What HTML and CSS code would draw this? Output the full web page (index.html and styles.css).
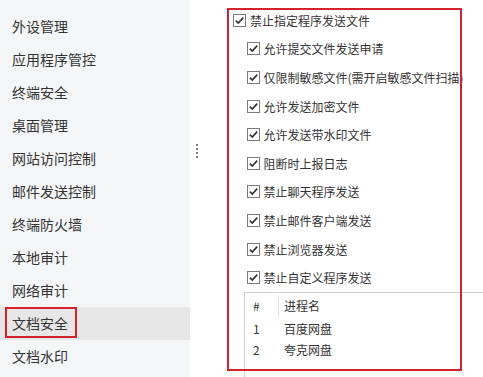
FILE: index.html
```html
<!DOCTYPE html>
<html lang="zh-CN">
<head>
<meta charset="utf-8">
<link rel="stylesheet" href="styles.css">
</head>
<body>
<div class="app">
  <nav class="sidebar">
    <div class="nav-item">外设管理</div>
    <div class="nav-item">应用程序管控</div>
    <div class="nav-item">终端安全</div>
    <div class="nav-item">桌面管理</div>
    <div class="nav-item">网站访问控制</div>
    <div class="nav-item">邮件发送控制</div>
    <div class="nav-item">终端防火墙</div>
    <div class="nav-item">本地审计</div>
    <div class="nav-item">网络审计</div>
    <div class="nav-item active">文档安全</div>
    <div class="nav-item">文档水印</div>
  </nav>
  <div class="handle"><i></i><i></i><i></i><i></i></div>
  <main class="content">
    <div class="options">
      <label class="opt"><svg class="cb" viewBox="0 0 13 13"><rect x="0.5" y="0.5" width="12" height="12"/><path d="M2.8 6.6 L5.3 9.1 L10.2 3.6"/></svg><span>禁止指定程序发送文件</span></label>
      <label class="opt sub"><svg class="cb" viewBox="0 0 13 13"><rect x="0.5" y="0.5" width="12" height="12"/><path d="M2.8 6.6 L5.3 9.1 L10.2 3.6"/></svg><span>允许提交文件发送申请</span></label>
      <label class="opt sub"><svg class="cb" viewBox="0 0 13 13"><rect x="0.5" y="0.5" width="12" height="12"/><path d="M2.8 6.6 L5.3 9.1 L10.2 3.6"/></svg><span>仅限制敏感文件(需开启敏感文件扫描)</span></label>
      <label class="opt sub"><svg class="cb" viewBox="0 0 13 13"><rect x="0.5" y="0.5" width="12" height="12"/><path d="M2.8 6.6 L5.3 9.1 L10.2 3.6"/></svg><span>允许发送加密文件</span></label>
      <label class="opt sub"><svg class="cb" viewBox="0 0 13 13"><rect x="0.5" y="0.5" width="12" height="12"/><path d="M2.8 6.6 L5.3 9.1 L10.2 3.6"/></svg><span>允许发送带水印文件</span></label>
      <label class="opt sub"><svg class="cb" viewBox="0 0 13 13"><rect x="0.5" y="0.5" width="12" height="12"/><path d="M2.8 6.6 L5.3 9.1 L10.2 3.6"/></svg><span>阻断时上报日志</span></label>
      <label class="opt sub"><svg class="cb" viewBox="0 0 13 13"><rect x="0.5" y="0.5" width="12" height="12"/><path d="M2.8 6.6 L5.3 9.1 L10.2 3.6"/></svg><span>禁止聊天程序发送</span></label>
      <label class="opt sub"><svg class="cb" viewBox="0 0 13 13"><rect x="0.5" y="0.5" width="12" height="12"/><path d="M2.8 6.6 L5.3 9.1 L10.2 3.6"/></svg><span>禁止邮件客户端发送</span></label>
      <label class="opt sub"><svg class="cb" viewBox="0 0 13 13"><rect x="0.5" y="0.5" width="12" height="12"/><path d="M2.8 6.6 L5.3 9.1 L10.2 3.6"/></svg><span>禁止浏览器发送</span></label>
      <label class="opt sub"><svg class="cb" viewBox="0 0 13 13"><rect x="0.5" y="0.5" width="12" height="12"/><path d="M2.8 6.6 L5.3 9.1 L10.2 3.6"/></svg><span>禁止自定义程序发送</span></label>
    </div>
    <div class="table">
      <div class="row head">
        <div class="c-num">#</div>
        <div class="c-name">进程名</div>
      </div>
      <div class="row">
        <div class="c-num">1</div>
        <div class="c-name">百度网盘</div>
      </div>
      <div class="row">
        <div class="c-num">2</div>
        <div class="c-name">夸克网盘</div>
      </div>
    </div>
  </main>
  <div class="mark mark-nav"></div>
  <div class="mark mark-panel"></div>
</div>
</body>
</html>
```
FILE: styles.css
```css
html, body {
  margin: 0;
  padding: 0;
  background: #fff;
}
body {
  font-family: "Noto Sans CJK SC", "Microsoft YaHei", sans-serif;
  color: #333;
  width: 483px;
  height: 377px;
  overflow: hidden;
}
.app {
  position: relative;
  display: flex;
  height: 377px;
}
.sidebar {
  width: 190px;
  flex: none;
  background: #f4f5f7;
  padding-top: 10px;
  box-sizing: border-box;
}
.nav-item {
  height: 33px;
  line-height: 33px;
  padding-left: 12px;
  font-size: 14px;
  color: #333;
}
.nav-item.active {
  background: #e6e6e6;
}
.handle {
  width: 14px;
  flex: none;
  display: flex;
  flex-direction: column;
  align-items: flex-start;
  padding: 144px 0 0 6px;
  box-sizing: border-box;
  gap: 2px;
}
.handle i {
  display: block;
  width: 2px;
  height: 2px;
  background: #7f7f7f;
}
.content {
  flex: 1;
  min-width: 0;
  padding-top: 6px;
  display: flex;
  flex-direction: column;
}
.options {
  padding-left: 29px;
}
.opt {
  display: flex;
  align-items: center;
  height: 28.6px;
  font-size: 12px;
  white-space: nowrap;
}
.opt.sub {
  padding-left: 13.5px;
}
.cb {
  width: 13px;
  height: 13px;
  flex: none;
  margin-right: 4px;
}
.cb rect {
  fill: #fff;
  stroke: #7a7a7a;
  stroke-width: 1;
}
.cb path {
  fill: none;
  stroke: #333;
  stroke-width: 1.6;
}
.table {
  margin-left: 40px;
  flex: 1;
  border-top: 1px solid #cfcfcf;
  border-left: 1px solid #cfcfcf;
  font-size: 12px;
}
.row {
  display: flex;
  align-items: center;
  height: 21px;
}
.row.head {
  height: 25px;
}
.c-num {
  width: 34px;
  padding-left: 8px;
  box-sizing: border-box;
  flex: none;
}
.c-name {
  padding-left: 5px;
}
.row.head .c-num {
  border-right: 1px solid #e3e3e3;
  height: 21px;
  display: flex;
  align-items: center;
}
.mark {
  position: absolute;
  border: 2px solid #d2232c;
  box-sizing: border-box;
  pointer-events: none;
}
.mark-nav {
  left: 5px;
  top: 307px;
  width: 72px;
  height: 31px;
}
.mark-panel {
  left: 227px;
  top: 8px;
  width: 235px;
  height: 363px;
}
```
